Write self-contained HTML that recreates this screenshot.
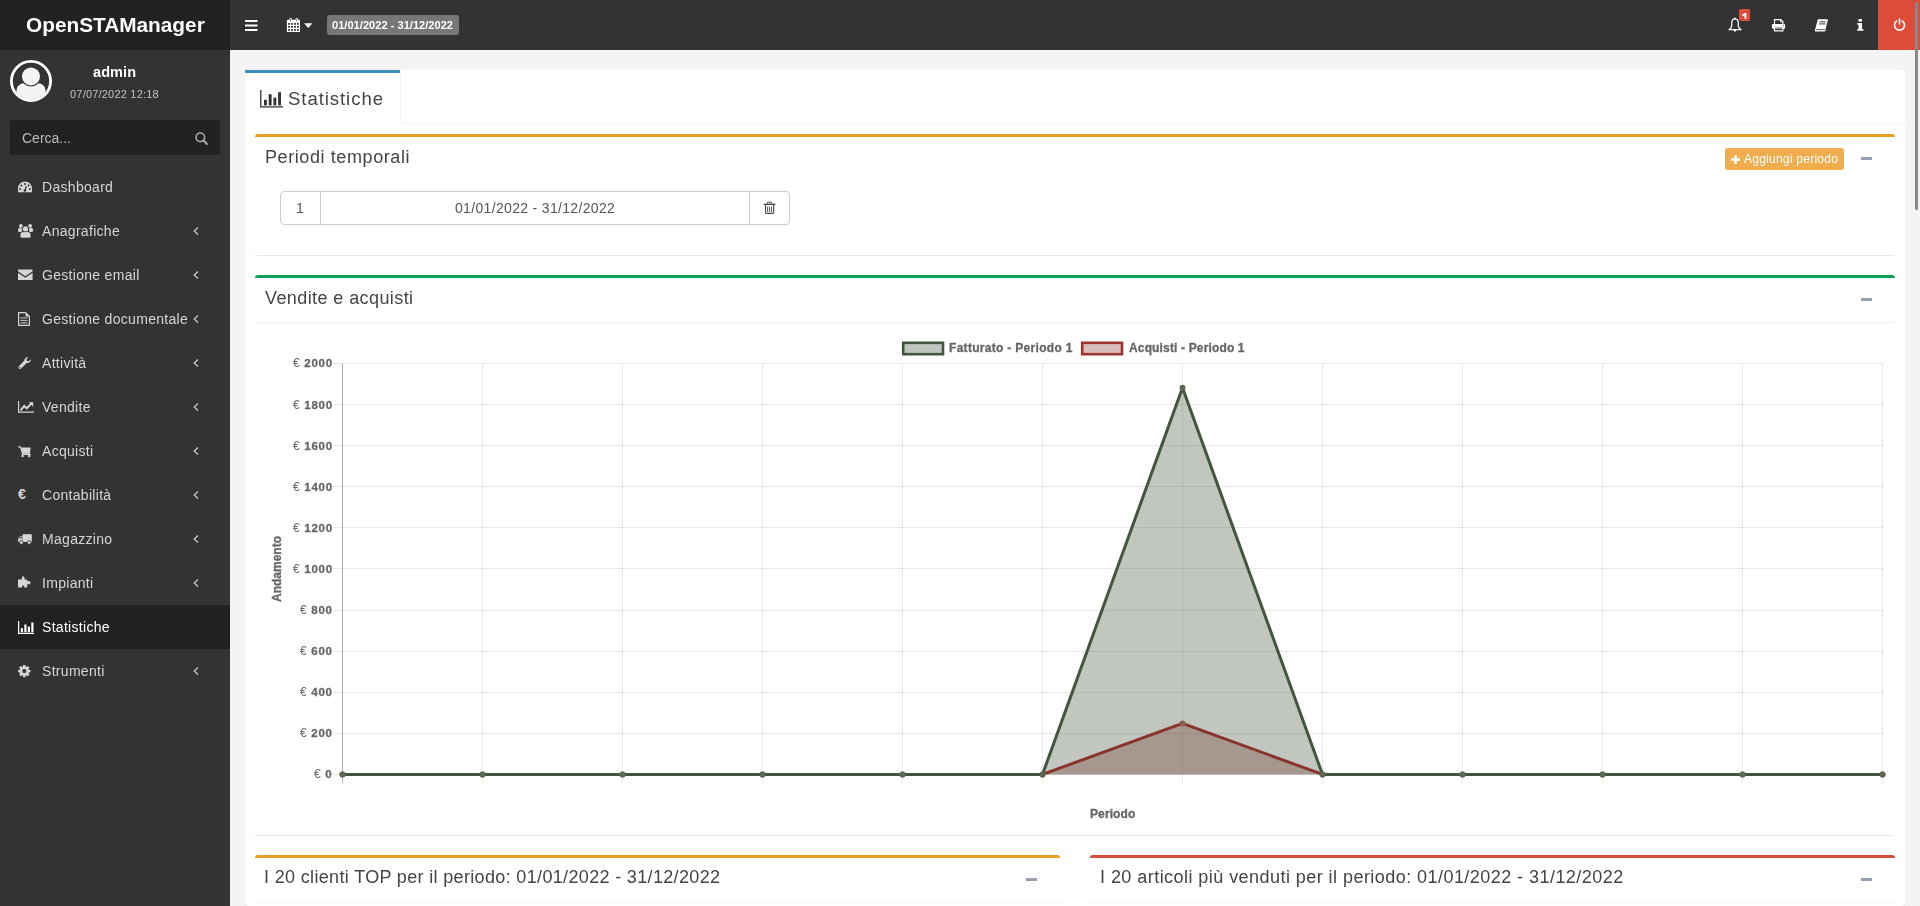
<!DOCTYPE html><html><head><meta charset="utf-8"><title>Statistiche</title><style>
*{box-sizing:border-box;margin:0;padding:0}
html,body{width:1920px;height:906px;overflow:hidden}
body{font-family:"Liberation Sans",sans-serif;background:#f4f4f4;position:relative;color:#333}
.a{position:absolute}
.t{position:absolute;white-space:nowrap;line-height:1;will-change:transform}
svg{position:absolute;overflow:visible}
</style></head><body>
<div class="a" style="left:0;top:0;width:230px;height:50px;background:#222"></div>
<div class="t" style="left:26px;top:15px;font-size:20.8px;font-weight:bold;color:#fff">OpenSTAManager</div>
<div class="a" style="left:230px;top:0;width:1690px;height:50px;background:#333"></div>
<svg style="left:245px;top:20px" width="13" height="11"><rect x="0" y="0" width="12.5" height="2" fill="#fff"/><rect x="0" y="4.5" width="12.5" height="2" fill="#fff"/><rect x="0" y="9" width="12.5" height="2" fill="#fff"/></svg>
<svg style="left:286px;top:17px" width="15" height="16" viewBox="0 0 15 16">
<rect x="0.9" y="2.8" width="13.1" height="12.2" rx="0.6" fill="#fff"/>
<rect x="3.5" y="1" width="2.3" height="3.6" rx="1" fill="#fff"/><rect x="9.6" y="1" width="2.3" height="3.6" rx="1" fill="#fff"/>
<rect x="4.3" y="1.9" width="0.75" height="2.3" fill="#333"/><rect x="10.4" y="1.9" width="0.75" height="2.3" fill="#333"/>
<rect x="2.2" y="6.1" width="1.65" height="1.65" fill="#111"/><rect x="5.1" y="6.1" width="1.65" height="1.65" fill="#111"/><rect x="8.2" y="6.1" width="1.65" height="1.65" fill="#111"/><rect x="11.1" y="6.1" width="1.65" height="1.65" fill="#111"/><rect x="2.2" y="9.0" width="1.65" height="1.65" fill="#111"/><rect x="5.1" y="9.0" width="1.65" height="1.65" fill="#111"/><rect x="8.2" y="9.0" width="1.65" height="1.65" fill="#111"/><rect x="11.1" y="9.0" width="1.65" height="1.65" fill="#111"/><rect x="2.2" y="12.1" width="1.65" height="1.65" fill="#111"/><rect x="5.1" y="12.1" width="1.65" height="1.65" fill="#111"/><rect x="8.2" y="12.1" width="1.65" height="1.65" fill="#111"/><rect x="11.1" y="12.1" width="1.65" height="1.65" fill="#111"/>
</svg>
<svg style="left:303.7px;top:22.8px" width="9" height="6"><path d="M0 0.2H8.4L4.2 4.9Z" fill="#fff"/></svg>
<div class="a" style="left:327px;top:15px;width:132px;height:20px;background:#777;border-radius:3px"></div>
<div class="t" style="left:332px;top:19.5px;font-size:11px;font-weight:bold;color:#fff;letter-spacing:0.05px">01/01/2022 - 31/12/2022</div>
<svg style="left:1728px;top:17px" width="14" height="16" viewBox="0 0 14 16">
<path d="M7 1.9C4.7 1.9 3.7 3.8 3.7 6.2V8.9C3.7 10.4 2.2 11.8 0.9 12.7H13.1C11.8 11.8 10.3 10.4 10.3 8.9V6.2C10.3 3.8 9.3 1.9 7 1.9Z" fill="none" stroke="#fff" stroke-width="1.25" stroke-linejoin="round"/>
<circle cx="7" cy="1.4" r="0.85" fill="#fff"/>
<path d="M5.6 13.1H8.4L7.9 14.6H6.1Z" fill="#fff"/>
</svg>
<div class="a" style="left:1739px;top:9px;width:11px;height:12px;background:#dd4b39;border-radius:2px"></div>
<svg style="left:1742px;top:13px" width="5" height="6" viewBox="0 0 5 6"><path d="M2.5 0H4.4V5.8H2.5V2.2C2 2.6 1.1 2.9 0.2 3.1V1.6C1.2 1.3 2 0.8 2.5 0Z" fill="#fff"/></svg>
<svg style="left:1771px;top:19px" width="15" height="13" viewBox="0 0 15 13">
<path d="M3.5 5V0.6H9.8L11.9 2.7V5" fill="none" stroke="#fff" stroke-width="1.15"/>
<path d="M9.6 0.6V2.9H11.9" fill="none" stroke="#fff" stroke-width="0.9"/>
<rect x="0.9" y="4.9" width="13.2" height="4.9" rx="1" fill="#fff"/>
<circle cx="12.3" cy="6.5" r="0.55" fill="#333"/>
<path d="M3.5 8.6V11.9H11.9V8.6" fill="#333" stroke="#fff" stroke-width="1.15"/>
<path d="M3.5 9.4H11.9" stroke="#fff" stroke-width="0.6"/>
</svg>
<svg style="left:1814px;top:18.6px" width="15" height="13" viewBox="0 0 15 13">
<path d="M3.9 0.3H13.2Q14.1 0.3 13.9 1.2L11.6 11.6Q11.4 12.4 10.5 12.4H1.9Q0.6 12.4 0.9 11.2Z" fill="#fff"/>
<path d="M5.6 2.8H11.8M5.1 4.9H11.3" stroke="#333" stroke-width="0.95"/>
<path d="M2.2 10.6H10.9" stroke="#333" stroke-width="0.8"/>
<path d="M13.6 2.4L11.7 10.9" stroke="#333" stroke-width="0.5"/>
</svg>
<svg style="left:1857px;top:19px" width="7" height="12" viewBox="0 0 7 12">
<rect x="1.5" y="0" width="3.5" height="2.6" fill="#fff"/>
<path d="M0.3 4H5V10H6.4V11.8H0.3V10H1.5V5.8H0.3Z" fill="#fff"/>
</svg>
<div class="a" style="left:1878px;top:0;width:42px;height:50px;background:#dd4b39"></div>
<svg style="left:1892.5px;top:18.3px" width="13" height="13" viewBox="0 0 14 14">
<path d="M4 3.2A5.4 5.4 0 1 0 10 3.2" fill="none" stroke="#fff" stroke-width="1.7" stroke-linecap="round"/>
<path d="M7 0.8V6.5" stroke="#fff" stroke-width="1.7" stroke-linecap="round"/>
</svg>
<div class="a" style="left:0;top:50px;width:230px;height:856px;background:#333"></div>
<svg style="left:10px;top:60px" width="42" height="42" viewBox="0 0 42 42">
<defs><clipPath id="avc"><circle cx="21" cy="21" r="18.4"/></clipPath></defs>
<circle cx="21" cy="21" r="19.6" fill="none" stroke="#fff" stroke-width="2.8"/>
<g clip-path="url(#avc)">
<path d="M6.5 42V31C6.5 26 10 23 15.5 23H26.5C32 23 35.5 26 35.5 31V42Z" fill="#f4f4f4"/>
<circle cx="21" cy="16.4" r="10.2" fill="#333"/>
<circle cx="21" cy="16.4" r="9" fill="#f4f4f4"/>
</g></svg>
<div class="t" style="left:93px;top:65px;font-size:14.5px;font-weight:bold;color:#fff;letter-spacing:0.1px">admin</div>
<div class="t" style="left:70px;top:89px;font-size:11px;color:#c2c2c2;letter-spacing:0.2px">07/07/2022 12:18</div>
<div class="a" style="left:10px;top:120px;width:210px;height:35px;background:#222;border-radius:3px"></div>
<div class="t" style="left:22px;top:131px;font-size:14px;color:#bbb;letter-spacing:0px">Cerca...</div>
<svg style="left:195px;top:132px" width="13" height="13" viewBox="0 0 13 13">
<circle cx="5.3" cy="5.3" r="4.3" fill="none" stroke="#aaa" stroke-width="1.6"/>
<path d="M8.5 8.5L12 12" stroke="#aaa" stroke-width="1.9" stroke-linecap="round"/>
</svg>
<div class="t" style="left:42px;top:180px;font-size:14px;color:#d6d6d6;letter-spacing:0.3px">Dashboard</div>
<svg style="left:18px;top:181.3px" width="14" height="12" viewBox="0 0 14 12"><path d="M0.2 11.3C0 10 0 8.8 0 7.4A7 7 0 0 1 14 7.4C14 8.8 14 10 13.8 11.3Z" fill="#d6d6d6"/><rect x="6.1" y="2.2" width="1.7" height="1.7" fill="#333"/><rect x="2.5" y="3.6" width="1.7" height="1.7" fill="#333" transform="rotate(45 3.35 4.45)"/><rect x="9.8" y="3.6" width="1.7" height="1.7" fill="#333" transform="rotate(45 10.65 4.45)"/><rect x="1.2" y="7.2" width="1.7" height="1.7" fill="#333"/><rect x="11.1" y="7.2" width="1.7" height="1.7" fill="#333"/><path d="M6.9 9.6L8.4 5.2" stroke="#333" stroke-width="1.3"/><circle cx="6.9" cy="9.5" r="1.3" fill="#333"/></svg>
<div class="t" style="left:42px;top:224px;font-size:14px;color:#d6d6d6;letter-spacing:0.3px">Anagrafiche</div>
<svg style="left:18px;top:222px" width="16" height="17" viewBox="0 0 16 17"><circle cx="2.9" cy="3.9" r="1.9" fill="#d6d6d6"/><circle cx="12.1" cy="3.9" r="1.9" fill="#d6d6d6"/><rect x="0" y="6" width="4.1" height="4" rx="1.6" fill="#d6d6d6"/><rect x="11" y="6" width="4.1" height="4" rx="1.6" fill="#d6d6d6"/><circle cx="7.5" cy="6.9" r="3.1" fill="#333"/><circle cx="7.5" cy="6.9" r="2.6" fill="#d6d6d6"/><path d="M2.1 13C2.1 10.6 3.6 9.7 5.3 9.7H9.7C11.4 9.7 12.9 10.6 12.9 13V14.2C12.9 15.4 12 16 11 16H4C3 16 2.1 15.4 2.1 14.2Z" fill="#d6d6d6" stroke="#333" stroke-width="0.6"/></svg>
<svg style="left:193px;top:227px" width="6" height="8" viewBox="0 0 6 8"><path d="M5 0.5L1.2 4L5 7.5" fill="none" stroke="#ccc" stroke-width="1.2"/></svg>
<div class="t" style="left:42px;top:268px;font-size:14px;color:#d6d6d6;letter-spacing:0.3px">Gestione email</div>
<svg style="left:17.7px;top:269.1px" width="15" height="12" viewBox="0 0 15 12"><path d="M0 0.5H14.6V2.2L7.3 7.2L0 2.2Z" fill="#d6d6d6"/><path d="M0 3.8L7.3 8.8L14.6 3.8V11H0Z" fill="#d6d6d6"/></svg>
<svg style="left:193px;top:271px" width="6" height="8" viewBox="0 0 6 8"><path d="M5 0.5L1.2 4L5 7.5" fill="none" stroke="#ccc" stroke-width="1.2"/></svg>
<div class="t" style="left:42px;top:312px;font-size:14px;color:#d6d6d6;letter-spacing:0.3px">Gestione documentale</div>
<svg style="left:18px;top:312.3px" width="12" height="14" viewBox="0 0 12 14"><path d="M0.6 0.6H7.6L11.4 4.4V13.4H0.6Z" fill="none" stroke="#d6d6d6" stroke-width="1.2" stroke-linejoin="round"/><path d="M7.6 0.6V4.4H11.4Z" fill="#d6d6d6"/><path d="M2.4 5.9H9.4M2.4 8.4H9.4M2.4 10.9H9.4" stroke="#d6d6d6" stroke-width="0.95"/></svg>
<svg style="left:193px;top:315px" width="6" height="8" viewBox="0 0 6 8"><path d="M5 0.5L1.2 4L5 7.5" fill="none" stroke="#ccc" stroke-width="1.2"/></svg>
<div class="t" style="left:42px;top:356px;font-size:14px;color:#d6d6d6;letter-spacing:0.3px">Attività</div>
<svg style="left:18.3px;top:356.8px" width="13" height="14" viewBox="0 0 13 14"><path d="M12.6 2.4L10.6 4.3L8.9 3.9L8.5 2.3L10.4 0.3C8.5 -0.3 6.3 1 6.4 3.6L0.9 9.2C0.2 9.9 0.3 10.8 0.9 11.4C1.5 12 2.4 12.1 3.1 11.4L8.7 5.9C11.1 6 13.3 4.5 12.6 2.4Z" fill="#d6d6d6"/><circle cx="2" cy="10.3" r="0.6" fill="#333"/></svg>
<svg style="left:193px;top:359px" width="6" height="8" viewBox="0 0 6 8"><path d="M5 0.5L1.2 4L5 7.5" fill="none" stroke="#ccc" stroke-width="1.2"/></svg>
<div class="t" style="left:42px;top:400px;font-size:14px;color:#d6d6d6;letter-spacing:0.3px">Vendite</div>
<svg style="left:18px;top:401px" width="16" height="13" viewBox="0 0 16 13"><path d="M0.6 0V11.2H16" fill="none" stroke="#d6d6d6" stroke-width="1.2"/><path d="M2.6 9.3L6.2 4.9L8.8 7.3L13 2.9" fill="none" stroke="#d6d6d6" stroke-width="2"/><path d="M10.6 1.2H15.2V5.8Z" fill="#d6d6d6"/></svg>
<svg style="left:193px;top:403px" width="6" height="8" viewBox="0 0 6 8"><path d="M5 0.5L1.2 4L5 7.5" fill="none" stroke="#ccc" stroke-width="1.2"/></svg>
<div class="t" style="left:42px;top:444px;font-size:14px;color:#d6d6d6;letter-spacing:0.3px">Acquisti</div>
<svg style="left:18px;top:445.8px" width="13" height="12" viewBox="0 0 13 12"><path d="M0.2 0.8H2.6L4.5 7.8H12.4" fill="none" stroke="#d6d6d6" stroke-width="1.3" stroke-linejoin="round"/><path d="M3.2 1.6H12.7L12 7.2H4.4Z" fill="#d6d6d6"/><rect x="3.5" y="8.6" width="2.1" height="2.6" fill="#d6d6d6"/><rect x="10.1" y="8.6" width="2.1" height="2.6" fill="#d6d6d6"/><path d="M4 8.4H12.4" stroke="#d6d6d6" stroke-width="1.2"/></svg>
<svg style="left:193px;top:447px" width="6" height="8" viewBox="0 0 6 8"><path d="M5 0.5L1.2 4L5 7.5" fill="none" stroke="#ccc" stroke-width="1.2"/></svg>
<div class="t" style="left:42px;top:488px;font-size:14px;color:#d6d6d6;letter-spacing:0.3px">Contabilità</div>
<svg style="left:17.5px;top:483.3px" width="12" height="20" viewBox="0 0 12 20"><text x="0" y="16.3" font-family="Liberation Sans" font-weight="bold" font-size="14.2" fill="#d6d6d6">€</text></svg>
<svg style="left:193px;top:491px" width="6" height="8" viewBox="0 0 6 8"><path d="M5 0.5L1.2 4L5 7.5" fill="none" stroke="#ccc" stroke-width="1.2"/></svg>
<div class="t" style="left:42px;top:532px;font-size:14px;color:#d6d6d6;letter-spacing:0.3px">Magazzino</div>
<svg style="left:18.3px;top:533.8px" width="14" height="11" viewBox="0 0 14 11"><path d="M4.6 0.2H13.8V8H4.6Z" fill="#d6d6d6"/><path d="M0.2 4.6L2.2 2.3H4.6V8H0.2Z" fill="#d6d6d6"/><path d="M1.2 4.5L2.5 3H3.8V4.5Z" fill="#333"/><circle cx="3.4" cy="8.6" r="1.9" fill="#d6d6d6" stroke="#333" stroke-width="0.9"/><circle cx="11.2" cy="8.6" r="1.9" fill="#d6d6d6" stroke="#333" stroke-width="0.9"/></svg>
<svg style="left:193px;top:535px" width="6" height="8" viewBox="0 0 6 8"><path d="M5 0.5L1.2 4L5 7.5" fill="none" stroke="#ccc" stroke-width="1.2"/></svg>
<div class="t" style="left:42px;top:576px;font-size:14px;color:#d6d6d6;letter-spacing:0.3px">Impianti</div>
<svg style="left:17.8px;top:576.2px" width="14" height="12" viewBox="0 0 14 12"><path d="M0 3.4H3.8V2.2C3.8 1.2 4.2 0.2 5.2 0.2C6.2 0.2 6.6 1.2 6.6 2.2V3.4H9.2V5.9C9.2 5.5 9.8 5 10.8 5C12 5 12.5 5.8 12.5 6.7C12.5 7.6 12 8.4 10.8 8.4C9.8 8.4 9.2 7.9 9.2 7.5V11.6H6.3V10.8C6.3 10 5.8 9.5 5.2 9.5C4.6 9.5 4.1 10 4.1 10.8V11.6H0Z" fill="#d6d6d6"/><path d="M3.8 6H0M9.2 6.7H7" stroke="#333" stroke-width="0"/></svg>
<svg style="left:193px;top:579px" width="6" height="8" viewBox="0 0 6 8"><path d="M5 0.5L1.2 4L5 7.5" fill="none" stroke="#ccc" stroke-width="1.2"/></svg>
<div class="a" style="left:0;top:605px;width:230px;height:44px;background:#222"></div>
<div class="t" style="left:42px;top:620px;font-size:14px;color:#fff;letter-spacing:0.3px">Statistiche</div>
<svg style="left:17.8px;top:621.3px" width="17" height="13" viewBox="0 0 17 13"><path d="M0.6 0V12.3H16.1" fill="none" stroke="#fff" stroke-width="1.2"/><rect x="2.8" y="7.2" width="2.2" height="4" fill="#fff"/><rect x="6.3" y="3.5" width="2.2" height="7.7" fill="#fff"/><rect x="9.8" y="5.6" width="2.2" height="5.6" fill="#fff"/><rect x="13.3" y="1.5" width="2.2" height="9.7" fill="#fff"/></svg>
<div class="t" style="left:42px;top:664px;font-size:14px;color:#d6d6d6;letter-spacing:0.3px">Strumenti</div>
<svg style="left:17.8px;top:665.3px" width="13" height="13" viewBox="0 0 13 13"><path d="M10.79 4.73L12.48 4.90L12.48 7.30L10.79 7.47L10.45 8.31L11.52 9.62L9.82 11.32L8.51 10.25L7.67 10.59L7.50 12.28L5.10 12.28L4.93 10.59L4.09 10.25L2.78 11.32L1.08 9.62L2.15 8.31L1.81 7.47L0.12 7.30L0.12 4.90L1.81 4.73L2.15 3.89L1.08 2.58L2.78 0.88L4.09 1.95L4.93 1.61L5.10 -0.08L7.50 -0.08L7.67 1.61L8.51 1.95L9.82 0.88L11.52 2.58L10.45 3.89Z" fill="#d6d6d6"/><circle cx="6.3" cy="6.1" r="2.1" fill="#333"/></svg>
<svg style="left:193px;top:667px" width="6" height="8" viewBox="0 0 6 8"><path d="M5 0.5L1.2 4L5 7.5" fill="none" stroke="#ccc" stroke-width="1.2"/></svg>
<div class="a" style="left:245px;top:70px;width:1660px;height:836px;background:#fff;border-radius:3px;box-shadow:0 1px 1px rgba(0,0,0,0.1)"></div>
<div class="a" style="left:245px;top:70px;width:155px;height:3px;background:#3c8dbc"></div>
<div class="a" style="left:400px;top:70px;width:1505px;height:54px;border-left:1px solid #f4f4f4;border-bottom:1px solid #f4f4f4"></div>
<svg style="left:260px;top:90px" width="24" height="18" viewBox="0 0 24 18">
<path d="M0.8 0V16.8H23" fill="none" stroke="#333" stroke-width="1.3"/>
<rect x="4" y="9.8" width="2.9" height="5.6" fill="#333"/><rect x="8.7" y="4.2" width="2.9" height="11.2" fill="#333"/><rect x="13.4" y="7.6" width="2.9" height="7.8" fill="#333"/><rect x="18.1" y="2.2" width="2.9" height="13.2" fill="#333"/>
</svg>
<div class="t" style="left:287.6px;top:90.3px;font-size:18.6px;color:#444;letter-spacing:0.92px">Statistiche</div>
<div class="a" style="left:255px;top:134px;width:1640px;height:121px;background:#fff;border-top:3px solid #e99d22;border-radius:3px;box-shadow:0 1px 1px rgba(0,0,0,0.1)"></div>
<div class="t" style="left:265px;top:148px;font-size:18px;color:#444;letter-spacing:0.59px">Periodi temporali</div>
<div class="a" style="left:1725px;top:148px;width:119px;height:22px;background:#f0ad4e;border-radius:3px"></div>
<svg style="left:1731px;top:154.5px" width="9" height="9" viewBox="0 0 10 10"><path d="M3.6 0H6.4V3.6H10V6.4H6.4V10H3.6V6.4H0V3.6H3.6Z" fill="#fff"/></svg>
<div class="t" style="left:1744px;top:152.5px;font-size:12px;color:#fff;letter-spacing:0.25px">Aggiungi periodo</div>
<div class="a" style="left:1861px;top:157px;width:11px;height:3px;background:#97a0b3"></div>
<div class="a" style="left:280px;top:191px;width:510px;height:34px;border:1px solid #ccc;border-radius:4px;background:#fff"></div>
<div class="a" style="left:320px;top:191px;width:1px;height:34px;background:#ccc"></div>
<div class="a" style="left:749px;top:191px;width:1px;height:34px;background:#ccc"></div>
<div class="t" style="left:296px;top:201px;font-size:14px;color:#555">1</div>
<div class="t" style="left:455px;top:201px;font-size:14px;color:#555;letter-spacing:0.33px">01/01/2022 - 31/12/2022</div>
<svg style="left:764px;top:201px" width="11" height="13" viewBox="0 0 11 13">
<path d="M0.1 3.4H10.9" stroke="#444" stroke-width="1.1" stroke-linecap="round"/>
<path d="M3.3 3.2V2.3Q3.3 1.3 4.3 1.3H6.9Q7.9 1.3 7.9 2.3V3.2" fill="none" stroke="#444" stroke-width="1"/>
<path d="M1.5 3.6V11.6Q1.5 12.4 2.3 12.4H8.9Q9.7 12.4 9.7 11.6V3.6" fill="none" stroke="#444" stroke-width="1.1"/>
<path d="M3.6 5.9V10.6M5.6 5.9V10.6M7.6 5.9V10.6" stroke="#444" stroke-width="0.9" stroke-linecap="round"/>
</svg>
<div class="a" style="left:255px;top:275px;width:1640px;height:560px;background:#fff;border-top:3px solid #0aa05a;border-radius:3px;box-shadow:0 1px 1px rgba(0,0,0,0.1)"></div>
<div class="t" style="left:265px;top:289.2px;font-size:18px;color:#444;letter-spacing:0.41px">Vendite e acquisti</div>
<div class="a" style="left:255px;top:322px;width:1640px;height:1px;background:#f4f4f4"></div>
<div class="a" style="left:1861px;top:298px;width:11px;height:3px;background:#97a0b3"></div>
<div class="a" style="left:255px;top:855px;width:805px;height:80px;background:#fff;border-top:3px solid #e99d22;border-radius:3px;box-shadow:0 1px 1px rgba(0,0,0,0.1)"></div>
<div class="t" style="left:264px;top:868px;font-size:18px;color:#444;letter-spacing:0.34px">I 20 clienti TOP per il periodo: 01/01/2022 - 31/12/2022</div>
<div class="a" style="left:255px;top:902px;width:805px;height:1px;background:#f4f4f4"></div>
<div class="a" style="left:1026px;top:878px;width:11px;height:3px;background:#97a0b3"></div>
<div class="a" style="left:1090px;top:855px;width:805px;height:80px;background:#fff;border-top:3px solid #d84c3b;border-radius:3px;box-shadow:0 1px 1px rgba(0,0,0,0.1)"></div>
<div class="t" style="left:1100px;top:868px;font-size:18px;color:#444;letter-spacing:0.45px">I 20 articoli più venduti per il periodo: 01/01/2022 - 31/12/2022</div>
<div class="a" style="left:1090px;top:902px;width:805px;height:1px;background:#f4f4f4"></div>
<div class="a" style="left:1861px;top:878px;width:11px;height:3px;background:#97a0b3"></div>
<svg style="left:0;top:0" width="1920" height="906" viewBox="0 0 1920 906"><path d="M333 774.5H1883.0" stroke="rgba(0,0,0,0.085)" stroke-width="1"/><path d="M333 733.5H1883.0" stroke="rgba(0,0,0,0.085)" stroke-width="1"/><path d="M333 692.5H1883.0" stroke="rgba(0,0,0,0.085)" stroke-width="1"/><path d="M333 651.5H1883.0" stroke="rgba(0,0,0,0.085)" stroke-width="1"/><path d="M333 610.5H1883.0" stroke="rgba(0,0,0,0.085)" stroke-width="1"/><path d="M333 568.5H1883.0" stroke="rgba(0,0,0,0.085)" stroke-width="1"/><path d="M333 527.5H1883.0" stroke="rgba(0,0,0,0.085)" stroke-width="1"/><path d="M333 486.5H1883.0" stroke="rgba(0,0,0,0.085)" stroke-width="1"/><path d="M333 445.5H1883.0" stroke="rgba(0,0,0,0.085)" stroke-width="1"/><path d="M333 404.5H1883.0" stroke="rgba(0,0,0,0.085)" stroke-width="1"/><path d="M333 363.5H1883.0" stroke="rgba(0,0,0,0.085)" stroke-width="1"/><path d="M342.5 363.6V783.5" stroke="rgba(0,0,0,0.085)" stroke-width="1"/><path d="M482.5 363.6V783.5" stroke="rgba(0,0,0,0.085)" stroke-width="1"/><path d="M622.5 363.6V783.5" stroke="rgba(0,0,0,0.085)" stroke-width="1"/><path d="M762.5 363.6V783.5" stroke="rgba(0,0,0,0.085)" stroke-width="1"/><path d="M902.5 363.6V783.5" stroke="rgba(0,0,0,0.085)" stroke-width="1"/><path d="M1042.5 363.6V783.5" stroke="rgba(0,0,0,0.085)" stroke-width="1"/><path d="M1182.5 363.6V783.5" stroke="rgba(0,0,0,0.085)" stroke-width="1"/><path d="M1322.5 363.6V783.5" stroke="rgba(0,0,0,0.085)" stroke-width="1"/><path d="M1462.5 363.6V783.5" stroke="rgba(0,0,0,0.085)" stroke-width="1"/><path d="M1602.5 363.6V783.5" stroke="rgba(0,0,0,0.085)" stroke-width="1"/><path d="M1742.5 363.6V783.5" stroke="rgba(0,0,0,0.085)" stroke-width="1"/><path d="M1882.5 363.6V783.5" stroke="rgba(0,0,0,0.085)" stroke-width="1"/><path d="M342.5 363.6V783.5" stroke="rgba(0,0,0,0.25)" stroke-width="1"/><polygon points="342.5,774.4 342.50,774.40 482.50,774.40 622.50,774.40 762.50,774.40 902.50,774.40 1042.50,774.40 1182.50,723.46 1322.50,774.40 1462.50,774.40 1602.50,774.40 1742.50,774.40 1882.50,774.40 1882.5,774.4" fill="rgba(140,58,48,0.35)"/><polyline points="342.50,774.40 482.50,774.40 622.50,774.40 762.50,774.40 902.50,774.40 1042.50,774.40 1182.50,723.46 1322.50,774.40 1462.50,774.40 1602.50,774.40 1742.50,774.40 1882.50,774.40" fill="none" stroke="#a82624" stroke-width="3" stroke-linejoin="round"/><circle cx="342.50" cy="774.40" r="3" fill="#b0605a"/><circle cx="482.50" cy="774.40" r="3" fill="#b0605a"/><circle cx="622.50" cy="774.40" r="3" fill="#b0605a"/><circle cx="762.50" cy="774.40" r="3" fill="#b0605a"/><circle cx="902.50" cy="774.40" r="3" fill="#b0605a"/><circle cx="1042.50" cy="774.40" r="3" fill="#b0605a"/><circle cx="1182.50" cy="723.46" r="3" fill="#b0605a"/><circle cx="1322.50" cy="774.40" r="3" fill="#b0605a"/><circle cx="1462.50" cy="774.40" r="3" fill="#b0605a"/><circle cx="1602.50" cy="774.40" r="3" fill="#b0605a"/><circle cx="1742.50" cy="774.40" r="3" fill="#b0605a"/><circle cx="1882.50" cy="774.40" r="3" fill="#b0605a"/><polygon points="342.5,774.4 342.50,774.40 482.50,774.40 622.50,774.40 762.50,774.40 902.50,774.40 1042.50,774.40 1182.50,387.84 1322.50,774.40 1462.50,774.40 1602.50,774.40 1742.50,774.40 1882.50,774.40 1882.5,774.4" fill="rgba(66,82,62,0.33)"/><polyline points="342.50,774.40 482.50,774.40 622.50,774.40 762.50,774.40 902.50,774.40 1042.50,774.40 1182.50,387.84 1322.50,774.40 1462.50,774.40 1602.50,774.40 1742.50,774.40 1882.50,774.40" fill="none" stroke="#42563e" stroke-width="3" stroke-linejoin="round"/><circle cx="342.50" cy="774.40" r="3" fill="#5a6a55"/><circle cx="482.50" cy="774.40" r="3" fill="#5a6a55"/><circle cx="622.50" cy="774.40" r="3" fill="#5a6a55"/><circle cx="762.50" cy="774.40" r="3" fill="#5a6a55"/><circle cx="902.50" cy="774.40" r="3" fill="#5a6a55"/><circle cx="1042.50" cy="774.40" r="3" fill="#5a6a55"/><circle cx="1182.50" cy="387.84" r="3" fill="#5a6a55"/><circle cx="1322.50" cy="774.40" r="3" fill="#5a6a55"/><circle cx="1462.50" cy="774.40" r="3" fill="#5a6a55"/><circle cx="1602.50" cy="774.40" r="3" fill="#5a6a55"/><circle cx="1742.50" cy="774.40" r="3" fill="#5a6a55"/><circle cx="1882.50" cy="774.40" r="3" fill="#5a6a55"/><rect x="903.2" y="342.8" width="39.8" height="11.4" fill="#c0c5bf" stroke="#42563e" stroke-width="2.6"/><rect x="1082.2" y="342.8" width="39.8" height="11.4" fill="#d8bcb9" stroke="#a03530" stroke-width="2.6"/></svg>
<div class="t" style="right:1587.5px;top:768.2px;font-size:11.5px;font-weight:bold;color:#666;letter-spacing:0.8px;-webkit-text-stroke:0.3px #666"><span style="font-weight:normal;font-size:12px;-webkit-text-stroke:0;color:#6a6a6a;letter-spacing:0.5px">€</span> 0</div>
<div class="t" style="right:1587.5px;top:727.1px;font-size:11.5px;font-weight:bold;color:#666;letter-spacing:0.8px;-webkit-text-stroke:0.3px #666"><span style="font-weight:normal;font-size:12px;-webkit-text-stroke:0;color:#6a6a6a;letter-spacing:0.5px">€</span> 200</div>
<div class="t" style="right:1587.5px;top:686.0px;font-size:11.5px;font-weight:bold;color:#666;letter-spacing:0.8px;-webkit-text-stroke:0.3px #666"><span style="font-weight:normal;font-size:12px;-webkit-text-stroke:0;color:#6a6a6a;letter-spacing:0.5px">€</span> 400</div>
<div class="t" style="right:1587.5px;top:645.0px;font-size:11.5px;font-weight:bold;color:#666;letter-spacing:0.8px;-webkit-text-stroke:0.3px #666"><span style="font-weight:normal;font-size:12px;-webkit-text-stroke:0;color:#6a6a6a;letter-spacing:0.5px">€</span> 600</div>
<div class="t" style="right:1587.5px;top:603.9px;font-size:11.5px;font-weight:bold;color:#666;letter-spacing:0.8px;-webkit-text-stroke:0.3px #666"><span style="font-weight:normal;font-size:12px;-webkit-text-stroke:0;color:#6a6a6a;letter-spacing:0.5px">€</span> 800</div>
<div class="t" style="right:1587.5px;top:562.8px;font-size:11.5px;font-weight:bold;color:#666;letter-spacing:0.8px;-webkit-text-stroke:0.3px #666"><span style="font-weight:normal;font-size:12px;-webkit-text-stroke:0;color:#6a6a6a;letter-spacing:0.5px">€</span> 1000</div>
<div class="t" style="right:1587.5px;top:521.7px;font-size:11.5px;font-weight:bold;color:#666;letter-spacing:0.8px;-webkit-text-stroke:0.3px #666"><span style="font-weight:normal;font-size:12px;-webkit-text-stroke:0;color:#6a6a6a;letter-spacing:0.5px">€</span> 1200</div>
<div class="t" style="right:1587.5px;top:480.6px;font-size:11.5px;font-weight:bold;color:#666;letter-spacing:0.8px;-webkit-text-stroke:0.3px #666"><span style="font-weight:normal;font-size:12px;-webkit-text-stroke:0;color:#6a6a6a;letter-spacing:0.5px">€</span> 1400</div>
<div class="t" style="right:1587.5px;top:439.6px;font-size:11.5px;font-weight:bold;color:#666;letter-spacing:0.8px;-webkit-text-stroke:0.3px #666"><span style="font-weight:normal;font-size:12px;-webkit-text-stroke:0;color:#6a6a6a;letter-spacing:0.5px">€</span> 1600</div>
<div class="t" style="right:1587.5px;top:398.5px;font-size:11.5px;font-weight:bold;color:#666;letter-spacing:0.8px;-webkit-text-stroke:0.3px #666"><span style="font-weight:normal;font-size:12px;-webkit-text-stroke:0;color:#6a6a6a;letter-spacing:0.5px">€</span> 1800</div>
<div class="t" style="right:1587.5px;top:357.4px;font-size:11.5px;font-weight:bold;color:#666;letter-spacing:0.8px;-webkit-text-stroke:0.3px #666"><span style="font-weight:normal;font-size:12px;-webkit-text-stroke:0;color:#6a6a6a;letter-spacing:0.5px">€</span> 2000</div>
<div class="t" style="left:949px;top:342px;font-size:12px;font-weight:bold;color:#666;letter-spacing:0.3px;-webkit-text-stroke:0.3px #666">Fatturato - Periodo 1</div>
<div class="t" style="left:1129px;top:342px;font-size:12px;font-weight:bold;color:#666;letter-spacing:0.15px;-webkit-text-stroke:0.3px #666">Acquisti - Periodo 1</div>
<div class="t" style="left:1090px;top:807.5px;font-size:12px;font-weight:bold;color:#666;letter-spacing:0.1px;-webkit-text-stroke:0.3px #666">Periodo</div>
<div class="t" style="left:270.5px;top:602px;font-size:12px;font-weight:bold;color:#666;-webkit-text-stroke:0.3px #666;transform:rotate(-90deg);transform-origin:0 0;letter-spacing:0px">Andamento</div>
<div class="a" style="left:1915px;top:2px;width:3px;height:208px;background:#888;border-radius:2px"></div>
</body></html>
